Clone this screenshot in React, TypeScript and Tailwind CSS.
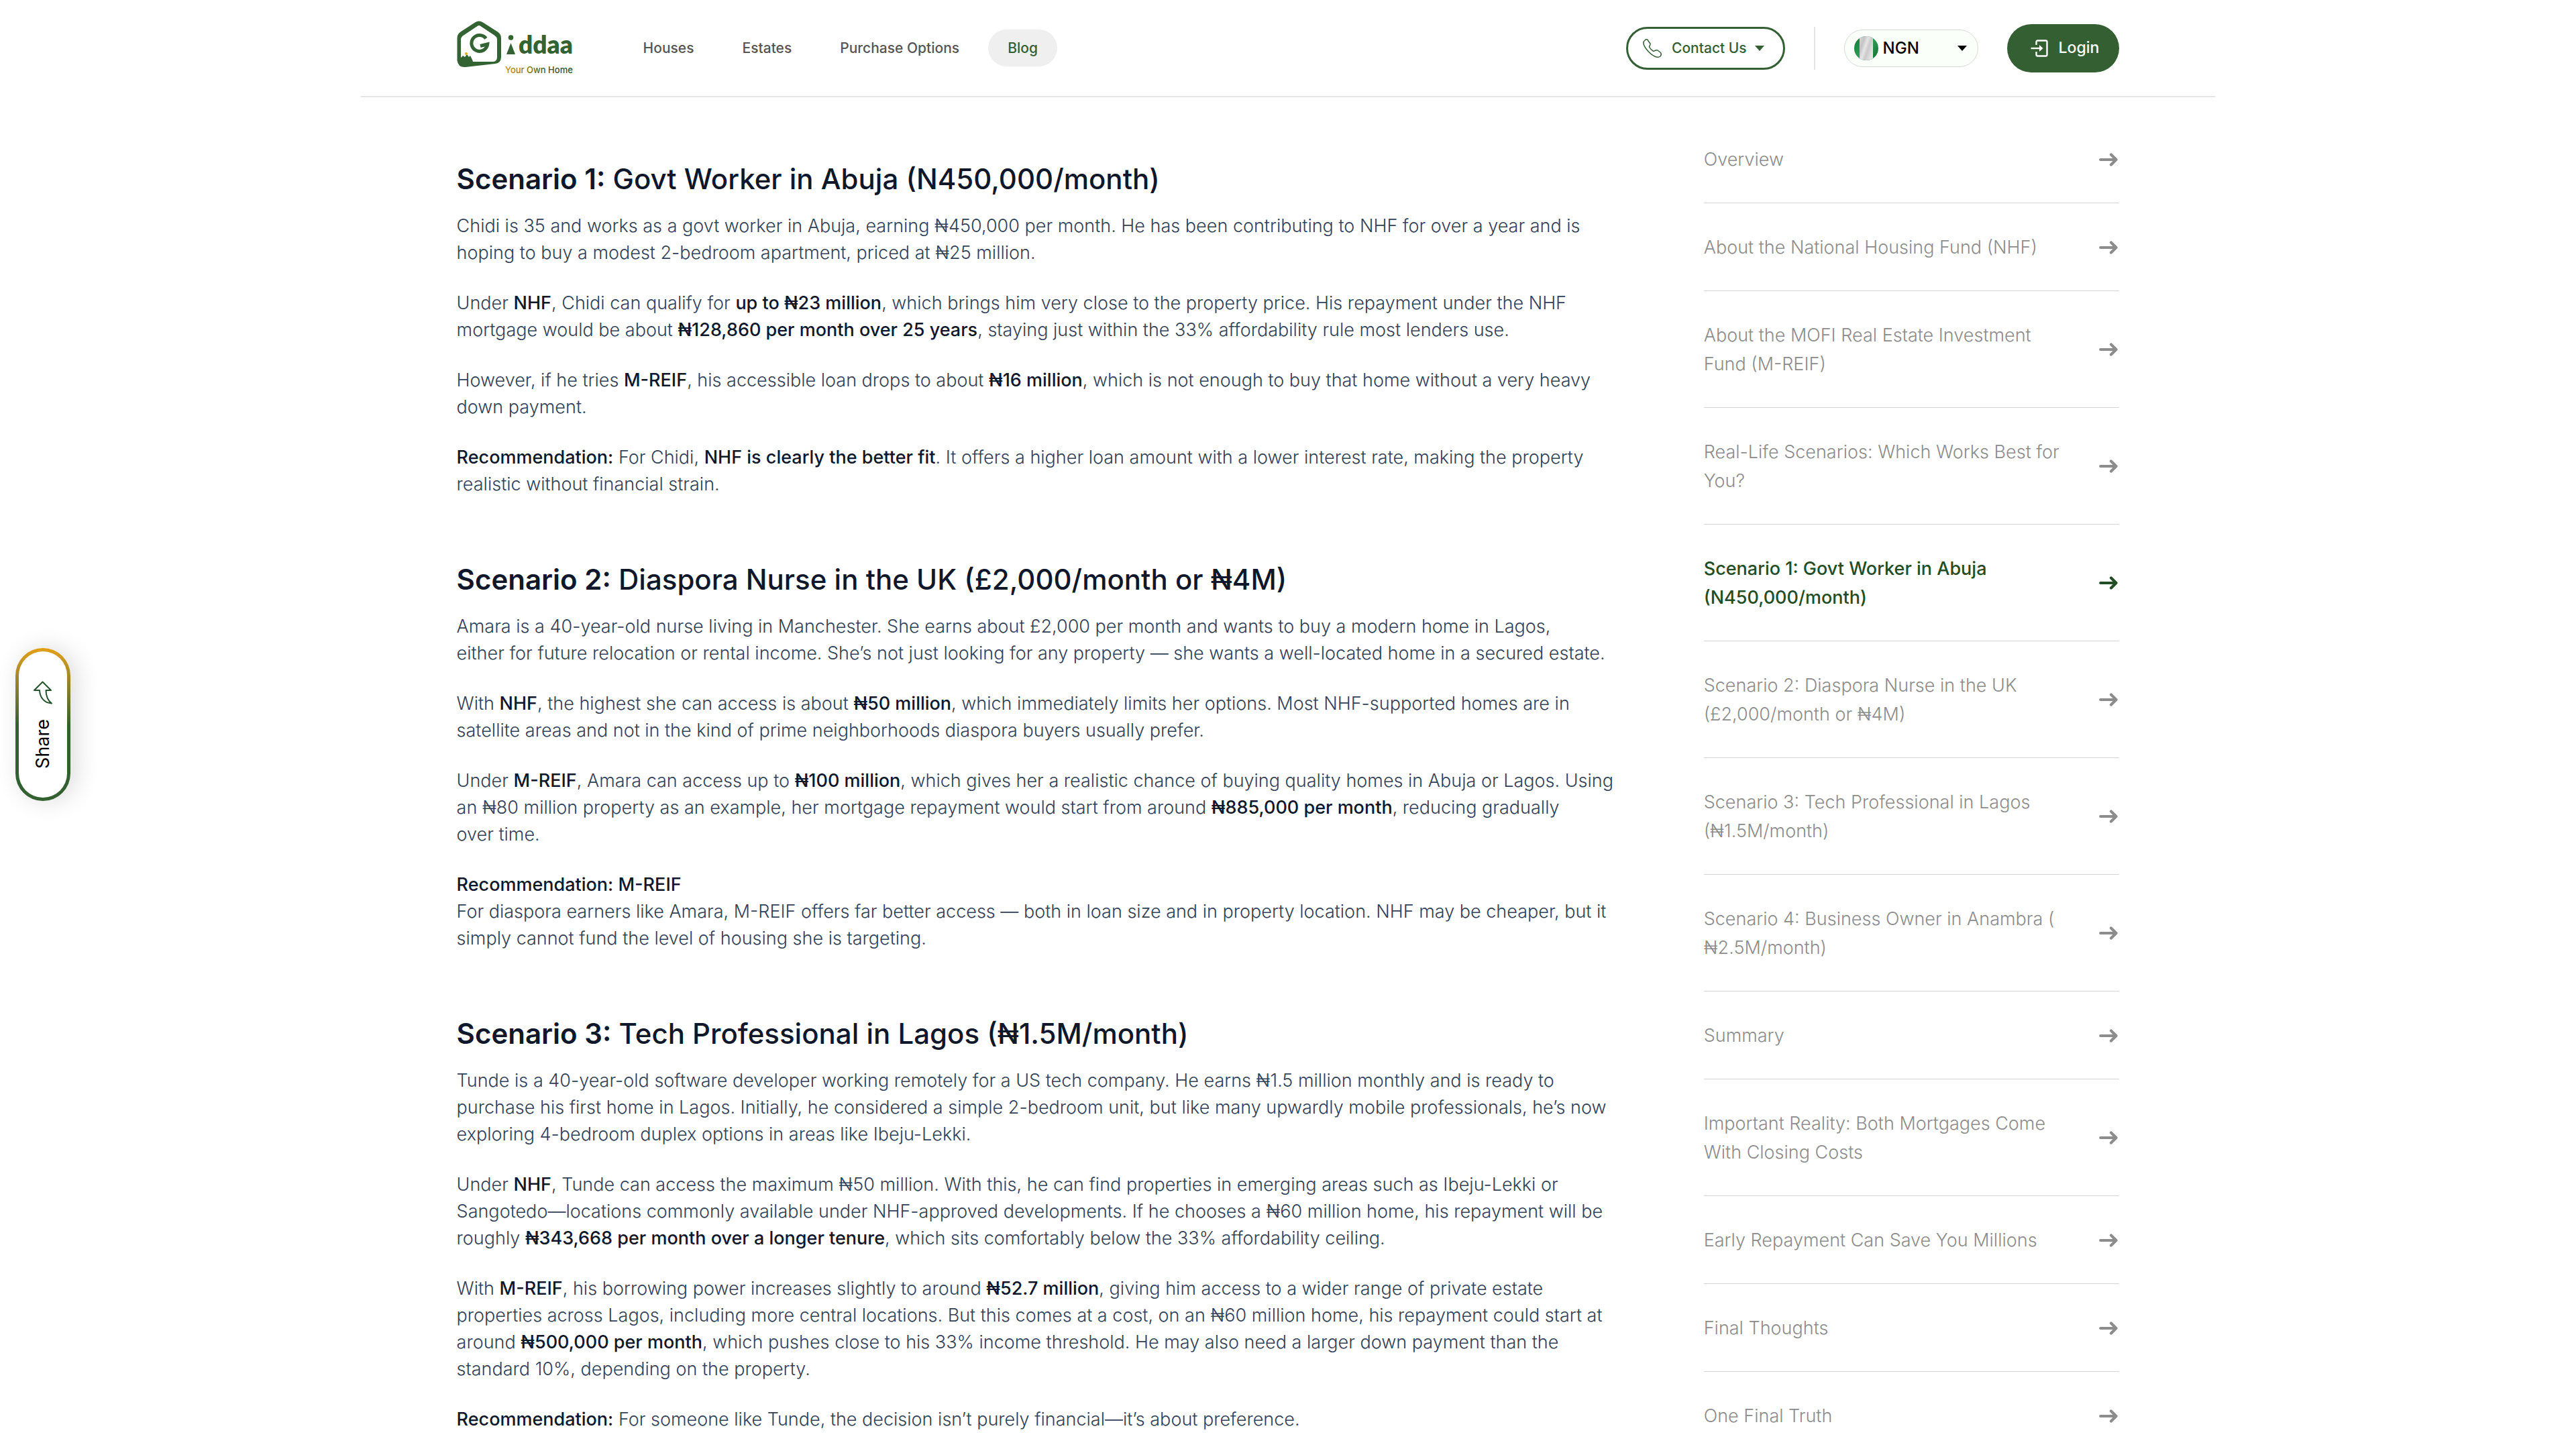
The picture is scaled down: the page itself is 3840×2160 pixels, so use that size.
import { Fragment, type ReactNode } from "react";

type Block = ReactNode[];

const B = ({ children }: { children: ReactNode }) => (
  <strong className="font-medium text-slate-900">{children}</strong>
);

const NAV = [
  { label: "Houses", active: false },
  { label: "Estates", active: false },
  { label: "Purchase Options", active: false },
  { label: "Blog", active: true },
];

const TOC: { lines: string[]; active?: boolean }[] = [
  { lines: ["Overview"] },
  { lines: ["About the National Housing Fund (NHF)"] },
  { lines: ["About the MOFI Real Estate Investment", "Fund (M-REIF)"] },
  { lines: ["Real-Life Scenarios: Which Works Best for", "You?"] },
  { lines: ["Scenario 1: Govt Worker in Abuja", "(N450,000/month)"], active: true },
  { lines: ["Scenario 2: Diaspora Nurse in the UK", "(£2,000/month or ₦4M)"] },
  { lines: ["Scenario 3: Tech Professional in Lagos", "(₦1.5M/month)"] },
  { lines: ["Scenario 4: Business Owner in Anambra (", "₦2.5M/month)"] },
  { lines: ["Summary"] },
  { lines: ["Important Reality: Both Mortgages Come", "With Closing Costs"] },
  { lines: ["Early Repayment Can Save You Millions"] },
  { lines: ["Final Thoughts"] },
  { lines: ["One Final Truth"] },
];

const SECTIONS: { lead: string; title: string; blocks: Block[] }[] = [
  {
    lead: "Scenario 1:",
    title: "Govt Worker in Abuja (N450,000/month)",
    blocks: [
      [
        "Chidi is 35 and works as a govt worker in Abuja, earning ₦450,000 per month. He has been contributing to NHF for over a year and is",
        "hoping to buy a modest 2-bedroom apartment, priced at ₦25 million.",
      ],
      [
        <>Under <B>NHF</B>, Chidi can qualify for <B>up to ₦23 million</B>, which brings him very close to the property price. His repayment under the NHF</>,
        <>mortgage would be about <B>₦128,860 per month over 25 years</B>, staying just within the 33% affordability rule most lenders use.</>,
      ],
      [
        <>However, if he tries <B>M-REIF</B>, his accessible loan drops to about <B>₦16 million</B>, which is not enough to buy that home without a very heavy</>,
        "down payment.",
      ],
      [
        <><B>Recommendation:</B> For Chidi, <B>NHF is clearly the better fit</B>. It offers a higher loan amount with a lower interest rate, making the property</>,
        "realistic without financial strain.",
      ],
    ],
  },
  {
    lead: "Scenario 2:",
    title: "Diaspora Nurse in the UK (£2,000/month or ₦4M)",
    blocks: [
      [
        "Amara is a 40-year-old nurse living in Manchester. She earns about £2,000 per month and wants to buy a modern home in Lagos,",
        "either for future relocation or rental income. She’s not just looking for any property — she wants a well-located home in a secured estate.",
      ],
      [
        <>With <B>NHF</B>, the highest she can access is about <B>₦50 million</B>, which immediately limits her options. Most NHF-supported homes are in</>,
        "satellite areas and not in the kind of prime neighborhoods diaspora buyers usually prefer.",
      ],
      [
        <>Under <B>M-REIF</B>, Amara can access up to <B>₦100 million</B>, which gives her a realistic chance of buying quality homes in Abuja or Lagos. Using</>,
        <>an ₦80 million property as an example, her mortgage repayment would start from around <B>₦885,000 per month</B>, reducing gradually</>,
        "over time.",
      ],
      [
        <B>Recommendation: M-REIF</B>,
        "For diaspora earners like Amara, M-REIF offers far better access — both in loan size and in property location. NHF may be cheaper, but it",
        "simply cannot fund the level of housing she is targeting.",
      ],
    ],
  },
  {
    lead: "Scenario 3:",
    title: "Tech Professional in Lagos (₦1.5M/month)",
    blocks: [
      [
        "Tunde is a 40-year-old software developer working remotely for a US tech company. He earns ₦1.5 million monthly and is ready to",
        "purchase his first home in Lagos. Initially, he considered a simple 2-bedroom unit, but like many upwardly mobile professionals, he’s now",
        "exploring 4-bedroom duplex options in areas like Ibeju-Lekki.",
      ],
      [
        <>Under <B>NHF</B>, Tunde can access the maximum ₦50 million. With this, he can find properties in emerging areas such as Ibeju-Lekki or</>,
        "Sangotedo—locations commonly available under NHF-approved developments. If he chooses a ₦60 million home, his repayment will be",
        <>roughly <B>₦343,668 per month over a longer tenure</B>, which sits comfortably below the 33% affordability ceiling.</>,
      ],
      [
        <>With <B>M-REIF</B>, his borrowing power increases slightly to around <B>₦52.7 million</B>, giving him access to a wider range of private estate</>,
        "properties across Lagos, including more central locations. But this comes at a cost, on an ₦60 million home, his repayment could start at",
        <>around <B>₦500,000 per month</B>, which pushes close to his 33% income threshold. He may also need a larger down payment than the</>,
        "standard 10%, depending on the property.",
      ],
      [
        <><B>Recommendation:</B> For someone like Tunde, the decision isn’t purely financial—it’s about preference.</>,
      ],
    ],
  },
];

function Lines({ lines }: { lines: ReactNode[] }) {
  return (
    <>
      {lines.map((line, i) => (
        <Fragment key={i}>
          {i > 0 && <br />}
          {line}
        </Fragment>
      ))}
    </>
  );
}

function Logo() {
  return (
    <svg viewBox="0 0 190 90" className="h-[90px] w-[190px]" role="img" aria-label="Giddaa, Your Own Home">
      <defs>
        <linearGradient id="tagline" x1="0" x2="1" y1="0" y2="0">
          <stop offset="0" stopColor="#c98f0e" />
          <stop offset="0.3" stopColor="#8a7413" />
          <stop offset="0.6" stopColor="#3f5a2b" />
          <stop offset="1" stopColor="#27502a" />
        </linearGradient>
      </defs>
      <g transform="translate(0 3)">
        <path
          fill="#336233"
          fillRule="evenodd"
          d="M27 3.500Q33 -0.500 39 3.500L61 17.500Q66 21 66 27V55Q66 64 57 65L13 70Q2 71 0.500 60V27Q0.500 21 5.500 17.500ZM30.500 9L9.500 23Q6 25.500 6 29V56L9 53L12 55L15 51L18 55L20 53L23 59L24 62H54Q60 61.500 60 55V29Q60 25 56.500 23L35.500 9Q33 7 30.500 9Z"
        />
        <circle cx="14" cy="50" r="2" fill="#f0a818" />
        <path
          d="M43.500 27.200A12 12 0 1 0 45.800 35.800L35 38.500"
          fill="none"
          stroke="#336233"
          strokeWidth="5"
        />
        <circle cx="80.500" cy="26" r="3.800" fill="#336233" />
        <path d="M80.500 34L87 51H74Z" fill="#336233" />
        <text x="92" y="50" fontFamily="Lato, sans-serif" fontWeight="800" fontSize="37" fill="#336233">
          ddaa
        </text>
        <text x="72" y="79" fontFamily="Inter, sans-serif" fontWeight="500" fontSize="13" fill="url(#tagline)">
          Your Own Home
        </text>
      </g>
    </svg>
  );
}

function Caret() {
  return (
    <svg viewBox="0 0 14 8" className="h-2 w-3.5 fill-current" aria-hidden="true">
      <path d="M0 0H14L7 8Z" />
    </svg>
  );
}

function PhoneIcon() {
  return (
    <svg viewBox="0 0 28 28" className="size-7" fill="none" stroke="currentColor" strokeWidth="1.500" strokeLinejoin="round" aria-hidden="true">
      <path d="M3 2C5 0 7 0.500 8 3L11 7C11.500 9 9.500 10.500 9.500 12C11 15 13 17 16 18.500C18 17 20 16.500 22 17L26 20C28 22 27.500 24 26 26C22 29 15 26 8 18.500C1 11 -1 5 3 2Z" />
    </svg>
  );
}

function Flag() {
  return (
    <svg viewBox="0 0 36 36" className="size-9 shrink-0" aria-hidden="true">
      <defs>
        <clipPath id="flagCircle">
          <circle cx="18" cy="18" r="18" />
        </clipPath>
        <linearGradient id="flagGreen" x1="0" x2="1" y1="0" y2="1">
          <stop offset="0" stopColor="#0f7a34" />
          <stop offset="0.500" stopColor="#2f9a52" />
          <stop offset="1" stopColor="#0c6b2b" />
        </linearGradient>
        <linearGradient id="flagWhite" x1="0" x2="1" y1="0" y2="0.600">
          <stop offset="0" stopColor="#d9d9d9" />
          <stop offset="0.300" stopColor="#c4c4c4" />
          <stop offset="0.500" stopColor="#e6e6e6" />
          <stop offset="0.700" stopColor="#cacaca" />
          <stop offset="1" stopColor="#e4e4e4" />
        </linearGradient>
      </defs>
      <g clipPath="url(#flagCircle)">
        <rect width="36" height="36" fill="url(#flagGreen)" />
        <rect x="8" width="20" height="36" fill="url(#flagWhite)" />
      </g>
    </svg>
  );
}

function LoginIcon() {
  return (
    <svg viewBox="0 0 26 26" className="size-[26px]" fill="none" stroke="currentColor" strokeWidth="2.400" aria-hidden="true">
      <path d="M8.500 8V3.500Q8.500 1.500 10.500 1.500H22.500Q24.500 1.500 24.500 3.500V22.500Q24.500 24.500 22.500 24.500H10.500Q8.500 24.500 8.500 22.500V18" />
      <path d="M0.500 13H15" />
      <path d="M13 8L18.500 13L13 18Z" fill="currentColor" stroke="none" />
    </svg>
  );
}

function Arrow() {
  return (
    <svg viewBox="0 0 28 20" className="mr-0.5 h-5 w-7 shrink-0" fill="none" stroke="currentColor" strokeWidth="4.200" strokeLinecap="round" strokeLinejoin="round" aria-hidden="true">
      <path d="M2.200 10H25M18 2.500L25.500 10L18 17.500" />
    </svg>
  );
}

function Header() {
  return (
    <header className="mx-auto flex h-[145px] w-[72%] items-center border-b-2 border-[#e6e6e6] px-[143px]">
      <a href="#home">
        <Logo />
      </a>
      <nav className="ml-[59px] flex items-center gap-3.5">
        {NAV.map((n) => (
          <a
            key={n.label}
            href={"#" + n.label}
            className={
              n.active
                ? "rounded-full bg-[#efefef] px-[29px] text-[21px] leading-[55px] font-medium text-[#335f32]"
                : "rounded-full px-[29px] text-[21px] leading-[55px] font-medium text-[#555]"
            }
          >
            {n.label}
          </a>
        ))}
      </nav>
      <div className="ml-auto flex items-center">
        <button className="flex h-16 items-center rounded-full border-[3px] border-[#335f32] pr-7 pl-[22px] text-[21px] font-medium text-[#335f32]">
          <PhoneIcon />
          <span className="mr-3 ml-[15px]">Contact Us</span>
          <Caret />
        </button>
        <span className="mx-[43px] h-16 w-0.5 bg-[#e3e3e3]" />
        <button className="flex h-14 w-[200px] items-center rounded-full border border-[#d8d8d8] bg-[#fafffa] pr-4 pl-3.5 text-2xl font-medium text-black">
          <Flag />
          <span className="mr-auto ml-[7px]">NGN</span>
          <Caret />
        </button>
        <button className="ml-[43px] flex h-[72px] items-center gap-4 rounded-full bg-[#335f32] pr-[30px] pl-[35px] text-[23px] font-medium text-white">
          <LoginIcon />
          Login
        </button>
      </div>
    </header>
  );
}

export default function App() {
  return (
    <div className="h-screen overflow-hidden bg-white font-['Inter',sans-serif]">
      <Header />
      <main className="mx-auto flex w-[72%] justify-between px-[143px]">
        <article className="flex flex-col gap-[92px] pt-[92px] whitespace-nowrap">
          {SECTIONS.map((s) => (
            <section key={s.lead}>
              <h2 className="text-[42px] leading-[60px] font-medium text-slate-900">
                <strong className="font-semibold">{s.lead}</strong> {s.title}
              </h2>
              <div className="mt-5 flex flex-col gap-[35px]">
                {s.blocks.map((b, i) => (
                  <p key={i} className="text-[27px] leading-10 font-light text-slate-700">
                    <Lines lines={b} />
                  </p>
                ))}
              </div>
            </section>
          ))}
        </article>
        <aside className="w-[25%] shrink-0 pt-[27px]">
          <ul>
            {TOC.map((t) => (
              <li key={t.lines[0]} className="border-b border-[#d4d4d4]">
                <a
                  href="#section"
                  className={
                    t.active
                      ? "flex items-center justify-between pt-11 pb-[43px] text-[27px] leading-[43px] font-medium whitespace-nowrap text-[#234d24]"
                      : "flex items-center justify-between pt-11 pb-[43px] text-[27px] leading-[43px] font-light whitespace-nowrap text-[#8c8c8c]"
                  }
                >
                  <span>
                    <Lines lines={t.lines} />
                  </span>
                  <Arrow />
                </a>
              </li>
            ))}
          </ul>
        </aside>
      </main>
      <button className="fixed top-1/2 left-[23px] -translate-y-1/2 rounded-full bg-linear-to-b from-[#e3a015] to-[#33602f] to-50% p-[5px] shadow-[8px_0_36px_rgba(0,0,0,0.14)]">
        <span className="flex h-[218px] w-[72px] flex-col items-center justify-center gap-[22px] rounded-full bg-white text-black">
          <svg viewBox="0 0 28 35" className="h-[35px] w-7" fill="none" stroke="#24522a" strokeWidth="2" strokeLinejoin="round" aria-hidden="true">
            <path d="M13.500 1.500L26 14H18.500C18.500 22 21 29 27 33.500C16 33 9.500 25 9 14H1Z" />
          </svg>
          <span className="rotate-180 text-[27px] leading-8 [writing-mode:vertical-rl]">Share</span>
        </span>
      </button>
    </div>
  );
}
